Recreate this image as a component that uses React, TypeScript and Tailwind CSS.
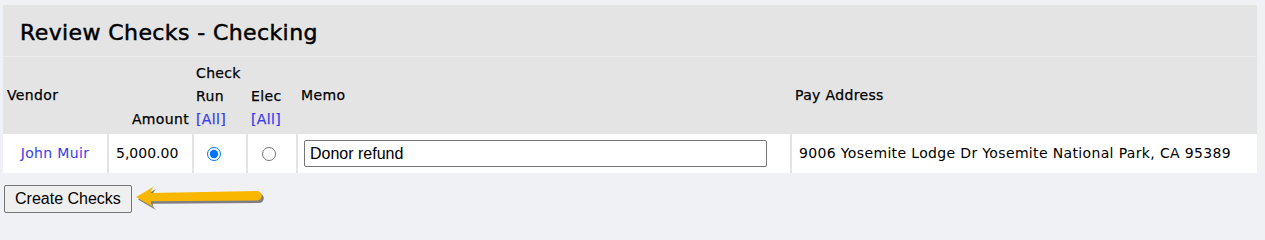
import { useState } from "react";

// Review screen shown before a check run is printed.
const FONT = "font-['DejaVu_Sans',sans-serif]";

function Arrow() {
  // yellow callout arrow pointing left at the button, with a soft dark shadow
  const shape = "M1 12 L19 1.5 Q15 6 16 8 L122 6 A4.8 4.8 0 0 1 122 15.6 L16 16.2 Q15 18.5 19 22.5 Z";
  return (
    <svg width="132" height="28" viewBox="0 0 132 28" className="shrink-0">
      <path d={shape} transform="translate(2 2.5)" fill="#333" opacity="0.6" />
      <path d={shape} fill="#fab700" />
    </svg>
  );
}

export default function App() {
  const [run, setRun] = useState("check");
  const [memo, setMemo] = useState("Donor refund");
  return (
    <div className={`min-h-screen bg-[#f0f1f5] pt-[5px] text-[14px] tracking-[0.35px] text-black ${FONT}`}>
      <div className="ml-[3px] mr-[8px] bg-[#e4e4e4]">
        <h1 className="h-[52px] border-b border-[#ececec] pl-[17px] pt-[14px] text-[22px] leading-[28px] tracking-[0.4px] [-webkit-text-stroke:0.5px_black]">Review Checks - Checking</h1>
        <table className="w-full border-collapse">
          <thead>
            <tr className="h-[77px] text-left leading-[23px] [-webkit-text-stroke:0.25px_currentColor]">
              <th className="w-[105px] px-[4px] align-middle font-normal">Vendor</th>
              <th className="w-[85px] px-[4px] pb-[3px] text-right align-bottom font-normal">Amount</th>
              <th className="w-[54px] px-[3px] pt-[5px] pb-[2px] align-top font-normal">
                Check<br />Run<br /><a href="#" className="text-[#3b3bf0]">[All]</a>
              </th>
              <th className="w-[50px] px-[4px] pb-[3px] align-bottom font-normal">
                Elec<br /><a href="#" className="text-[#3b3bf0]">[All]</a>
              </th>
              <th className="w-[494px] px-[4px] align-middle font-normal">Memo</th>
              <th className="px-[4px] align-middle font-normal">Pay Address</th>
            </tr>
          </thead>
          <tbody>
            <tr className="h-[39px] bg-white">
              <td className="border-r-2 border-[#e4e4e4] text-center">
                <a href="#" className="text-[#3b3bf0]">John Muir</a>
              </td>
              <td className="border-r-2 border-[#e4e4e4] pl-[7px] tracking-normal">5,000.00</td>
              <td className="border-r-2 border-[#e4e4e4] pl-[13px]">
                <input type="radio" name="run" checked={run === "check"} onChange={() => setRun("check")} className="block h-[14px] w-[14px] accent-[#0075ff]" />
              </td>
              <td className="border-r-2 border-[#e4e4e4] pl-[14px]">
                <input type="radio" name="run" checked={run === "elec"} onChange={() => setRun("elec")} className="block h-[14px] w-[14px]" />
              </td>
              <td className="border-r-2 border-[#e4e4e4] pl-[6px]">
                <input
                  value={memo}
                  onChange={(e) => setMemo(e.target.value)}
                  className="block h-[27px] w-[463px] rounded-[2px] border border-[#767676] bg-white px-[5px] font-['Liberation_Sans',sans-serif] text-[16px] tracking-normal"
                />
              </td>
              <td className="pl-[7px]">9006 Yosemite Lodge Dr Yosemite National Park, CA 95389</td>
            </tr>
          </tbody>
        </table>
      </div>
      <div className="mt-[12px] flex items-center gap-[3px] pl-[4px]">
        <button className="h-[28px] rounded-[2px] border border-[#767676] bg-[#efefef] px-[10px] font-['Liberation_Sans',sans-serif] text-[16px] tracking-normal">Create Checks</button>
        <Arrow />
      </div>
    </div>
  );
}
